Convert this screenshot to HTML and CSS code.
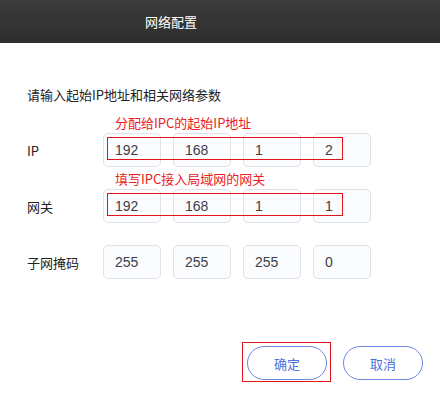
FILE: index.html
```html
<!DOCTYPE html>
<html lang="zh-CN">
<head>
<meta charset="utf-8">
<title>网络配置</title>
<link rel="stylesheet" href="styles.css">
</head>
<body>
<div class="dialog">
  <div class="header"><span class="title">网络配置</span></div>
  <div class="content">
    <p class="intro">请输入起始IP地址和相关网络参数</p>
    <div class="form">
      <div class="row">
        <span class="label">IP</span>
        <div class="boxes">
          <span class="note">分配给IPC的起始IP地址</span>
          <span class="box">192</span><span class="box">168</span><span class="box">1</span><span class="box">2</span>
          <span class="mark"></span>
        </div>
      </div>
      <div class="row">
        <span class="label">网关</span>
        <div class="boxes">
          <span class="note">填写IPC接入局域网的网关</span>
          <span class="box">192</span><span class="box">168</span><span class="box">1</span><span class="box">1</span>
          <span class="mark"></span>
        </div>
      </div>
      <div class="row">
        <span class="label">子网掩码</span>
        <div class="boxes">
          <span class="box">255</span><span class="box">255</span><span class="box">255</span><span class="box">0</span>
        </div>
      </div>
    </div>
    <div class="actions">
      <span class="btn-wrap"><button class="btn">确定</button><span class="mark-btn"></span></span>
      <button class="btn">取消</button>
    </div>
  </div>
</div>
</body>
</html>
```
FILE: styles.css
```css
html, body {
  margin: 0;
  padding: 0;
  background: #ffffff;
}
body {
  width: 440px;
  height: 394px;
  overflow: hidden;
  font-family: "Noto Sans CJK SC", "Liberation Sans", sans-serif;
  color: #222;
}
.header {
  height: 43px;
  background: linear-gradient(to bottom, #3b3b3b, #2e2e2e);
  display: flex;
  align-items: center;
  padding-left: 145px;
}
.title {
  color: #ffffff;
  font-size: 13px;
  line-height: 18px;
}
.content {
  padding: 0 17px 0 27px;
}
.intro {
  margin: 42px 0 0 0;
  font-size: 13px;
  line-height: 20px;
  color: #222;
}
.form {
  margin-top: 28px;
  display: flex;
  flex-direction: column;
  gap: 22px;
}
.row {
  display: flex;
  align-items: center;
  height: 34px;
}
.label {
  width: 76px;
  font-size: 13px;
  color: #222;
}
.boxes {
  position: relative;
  display: flex;
  gap: 12px;
}
.box {
  box-sizing: border-box;
  width: 58px;
  height: 34px;
  border: 1px solid #dfe2e8;
  border-radius: 5px;
  background: #fbfcfd;
  padding-left: 11px;
  font-family: "Liberation Sans", sans-serif;
  font-size: 14px;
  color: #3e3e48;
  display: flex;
  align-items: center;
}
.note {
  position: absolute;
  left: 12px;
  top: -19px;
  font-size: 13px;
  line-height: 18px;
  color: #ec1c24;
  white-space: nowrap;
}
.mark {
  position: absolute;
  left: 4px;
  top: 4px;
  width: 236px;
  height: 23px;
  box-sizing: border-box;
  border: 1.5px solid #e3141c;
}
.actions {
  margin-top: 67px;
  display: flex;
  justify-content: flex-end;
  gap: 16px;
}
.btn-wrap {
  position: relative;
  display: flex;
}
.btn {
  box-sizing: border-box;
  width: 80px;
  height: 34px;
  border: 1px solid #6c87e2;
  border-radius: 17px;
  background: #ffffff;
  color: #4f6fd8;
  font-family: "Noto Sans CJK SC", sans-serif;
  font-size: 13px;
  padding: 0;
}
.mark-btn {
  position: absolute;
  left: -5px;
  top: -4px;
  width: 89px;
  height: 40px;
  box-sizing: border-box;
  border: 1.5px solid #e3141c;
}
```
